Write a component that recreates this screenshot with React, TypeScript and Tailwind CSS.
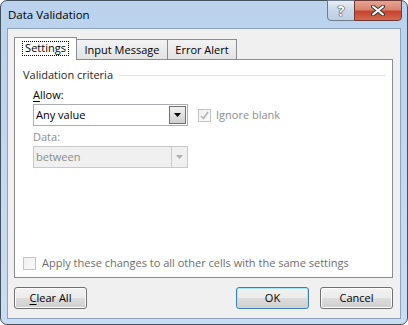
import React from "react";

const font = "font-['Segoe_UI','Open_Sans',sans-serif]";

function Check({ checked = false }: { checked?: boolean }) {
  return (
    <span className="w-[13px] h-[13px] shrink-0 border border-[#c4c4c4] bg-gradient-to-br from-[#f0f0f0] to-[#fbfbfb] flex items-center justify-center">
      {checked && (
        <svg width="9" height="9" viewBox="0 0 9 9">
          <path d="M1 5 L3.5 7.5 L8 1" fill="none" stroke="#b4b4b4" strokeWidth="1.6" />
        </svg>
      )}
    </span>
  );
}

function Combo({ value, disabled = false }: { value: string; disabled?: boolean }) {
  return (
    <div
      className={`w-[155px] h-[22px] flex items-stretch border ${
        disabled ? "border-[#c9c9c9] bg-[#f0f0f0] text-[#8d8d8d]" : "border-[#abadb3] bg-white text-black"
      }`}
    >
      <span className="flex-1 flex items-center pl-[2px]">{value}</span>
      {disabled ? (
        <span className="w-[16px] border-l border-[#c9c9c9] flex items-center justify-center">
          <svg width="7" height="4" viewBox="0 0 7 4">
            <path d="M0 0 H7 L3.5 4 Z" fill="#b0b0b0" />
          </svg>
        </span>
      ) : (
        <span className="w-[17px] my-[1px] mr-[1px] border border-[#707070] bg-gradient-to-b from-[#f2f2f2] to-[#cfcfcf] flex items-center justify-center">
          <svg width="7" height="4" viewBox="0 0 7 4">
            <path d="M0 0 H7 L3.5 4 Z" fill="#000" />
          </svg>
        </span>
      )}
    </div>
  );
}

function Btn({ children, primary = false }: { children: React.ReactNode; primary?: boolean }) {
  return (
    <button
      className={`w-[73px] h-[22px] rounded-[3px] border ${
        primary
          ? "border-[#3c7fb1] shadow-[inset_0_0_0_1px_#a9e4f7]"
          : "border-[#707070] shadow-[inset_0_0_0_1px_#fcfcfc]"
      } bg-[linear-gradient(#f2f2f2_0%,#ebebeb_50%,#dddddd_50%,#cfcfcf_100%)] text-black flex items-center justify-center`}
    >
      {children}
    </button>
  );
}

export default function App() {
  return (
    <div className={`w-[408px] h-[325px] bg-white text-[11px] leading-[16px] ${font}`}>
      <div className="relative w-full h-full rounded-[7px] border border-[#44525f] bg-gradient-to-b from-[#bad2ec] via-[#c3d8ef] to-[#cadcf0] flex flex-col px-[6px] pb-[5px]">
        {/* title bar */}
        <div className="h-[27px] flex items-center pl-[1px] text-[11.5px] text-black">Data Validation</div>

        {/* caption buttons */}
        <div className="absolute top-[-1px] right-[5px] flex">
          <div className="w-[28px] h-[21px] rounded-bl-[4px] border border-[#6d7b8d] bg-gradient-to-b from-[#e9eff7] via-[#c9d7e8] to-[#bfd0e4] flex items-center justify-center text-white font-bold text-[14px] [text-shadow:0_0_1px_#333,0_0_1px_#333,0_0_1px_#333]">
            ?
          </div>
          <div className="w-[48px] h-[21px] -ml-px rounded-br-[4px] border border-[#6e3a35] bg-[linear-gradient(#e8a493_0%,#d98570_45%,#c7432f_55%,#d4694f_100%)] flex items-center justify-center">
            <svg width="14" height="11" viewBox="0 0 14 11">
              <path d="M2 1.5 L12 9.5 M12 1.5 L2 9.5" stroke="#3b3b3b" strokeWidth="4" strokeLinecap="round" />
              <path d="M2 1.5 L12 9.5 M12 1.5 L2 9.5" stroke="#ffffff" strokeWidth="2" strokeLinecap="round" />
            </svg>
          </div>
        </div>

        {/* client area */}
        <div className="flex-1 border border-[#8ea3bb] bg-[#f0f0f0] flex flex-col pt-[8px] pl-[6px] pr-[7px] pb-[9px]">
          {/* tabs */}
          <div className="h-[22px] flex items-end">
            <div className="relative z-10 w-[63px] h-[23px] -mb-px bg-white border border-b-0 border-[#898c95] flex items-center justify-center pb-[2px]">
              <span className="px-[2px] h-[13px] flex items-center outline-1 outline-dotted outline-black">Settings</span>
            </div>
            <div className="w-[92px] h-[20px] -ml-px border border-b-0 border-[#898c95] bg-gradient-to-b from-[#f3f3f3] to-[#e3e3e3] flex items-center justify-center">
              Input Message
            </div>
            <div className="w-[70px] h-[20px] -ml-px border border-b-0 border-[#898c95] bg-gradient-to-b from-[#f3f3f3] to-[#e3e3e3] flex items-center justify-center">
              Error Alert
            </div>
          </div>

          {/* panel */}
          <div className="h-[219px] border border-[#898c95] bg-white flex flex-col pl-[8px] pr-[6px] pt-[7px] pb-[6px]">
            <div className="flex items-center gap-[6px] h-[16px]">
              <span className="text-[#1e1e1e]">Validation criteria</span>
              <span className="flex-1 h-px bg-[#dde3ea]" />
            </div>

            <div className="pl-[10px] mt-[4px] flex flex-col">
              <span className="h-[16px]">
                <span className="underline underline-offset-2">A</span>llow:
              </span>
              <div className="mt-px flex items-center gap-[10px]">
                <Combo value="Any value" />
                <div className="flex items-center gap-[5px] text-[#8d8d8d]">
                  <Check checked />
                  <span>Ignore blank</span>
                </div>
              </div>
              <span className="h-[16px] mt-[3px] text-[#8d8d8d]">Data:</span>
              <div className="mt-px">
                <Combo value="between" disabled />
              </div>
            </div>

            <div className="flex-1" />

            <div className="flex items-center gap-[6px] text-[#6d6d6d]">
              <Check />
              <span>Apply these changes to all other cells with the same settings</span>
            </div>
          </div>

          {/* buttons */}
          <div className="mt-[9px] flex items-center">
            <Btn>
              <span>
                <span className="underline underline-offset-2">C</span>lear All
              </span>
            </Btn>
            <div className="flex-1" />
            <Btn primary>OK</Btn>
            <div className="w-[11px]" />
            <Btn>Cancel</Btn>
          </div>
        </div>
      </div>
    </div>
  );
}
